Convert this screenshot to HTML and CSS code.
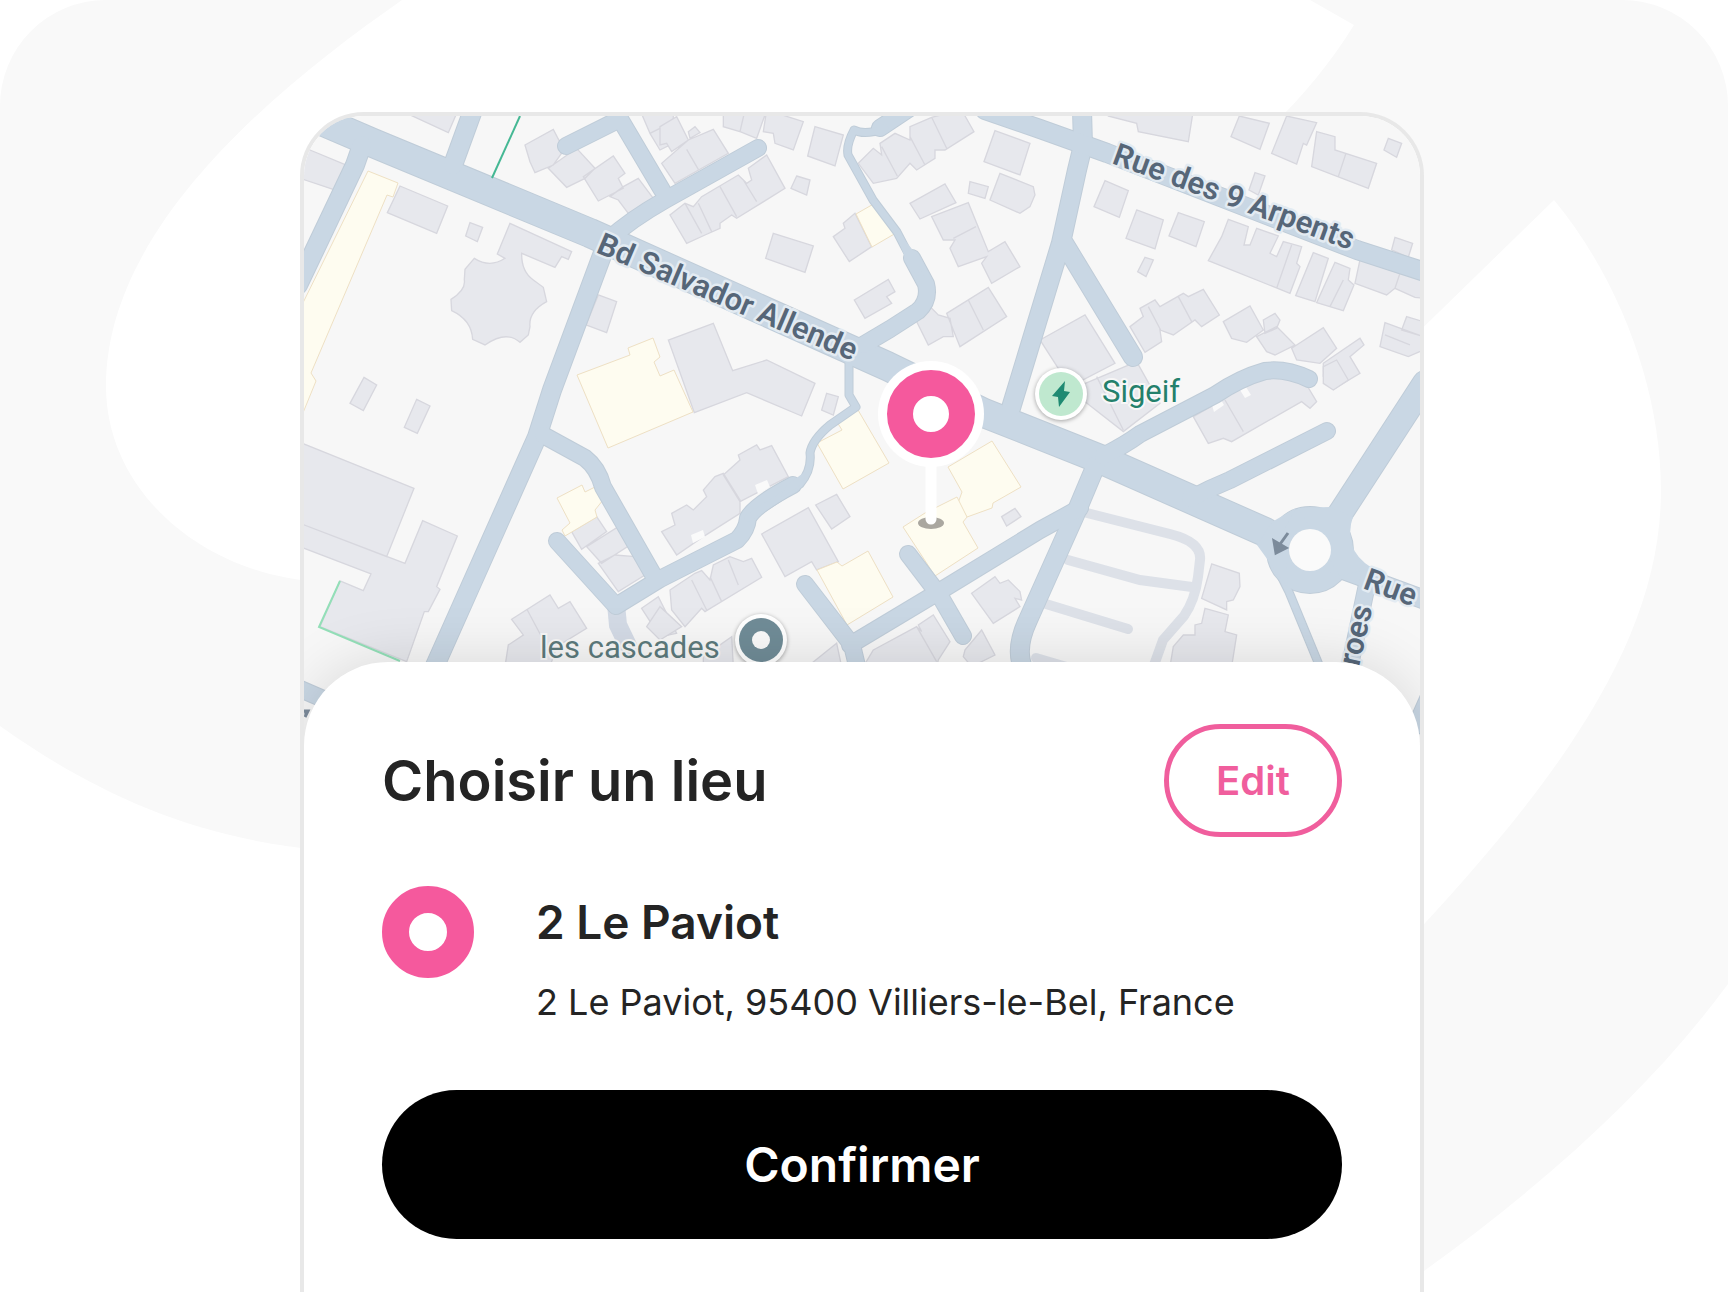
FILE: index.html
```html
<!DOCTYPE html>
<html lang="fr">
<head>
  <meta charset="UTF-8" />
  <meta name="viewport" content="width=device-width, initial-scale=1.0">
  <title>Choisir un lieu</title>
  <link rel="stylesheet" href="styles.css">
</head>
<body>
  <svg class="backdrop" viewBox="0 0 1728 1292" preserveAspectRatio="xMidYMin slice" aria-hidden="true">
    <path d="M106 0H402C270 92 106 230 106 386C106 490 200 574 320 582V850C190 838 90 790 0 726V106A106 106 0 0 1 106 0Z" />
    <path d="M1310 0H1622A106 106 0 0 1 1728 106V984C1650 1090 1540 1190 1400 1288V950C1560 780 1661 640 1661 490C1661 390 1620 280 1554 200L1400 350L1270 128Q1320 80 1354 25Z" />
  </svg>

  <main class="phone">
    <svg class="map" viewBox="304 116 1116 630" role="img" aria-label="Carte">
      <!-- buildings -->
      <g class="buildings" transform="translate(290 100) scale(.3333)">
        <path d="M350 40L475 98 500 40ZM60 150L180 200 150 275 30 235 30 160ZM330 258L473 318 440 400 292 338ZM540 368L578 382 562 425 527 408Z" />
        <path d="M660 370L845 455 835 478 815 470 795 502 695 460Q694 515 730 540L760 562 770 605Q715 635 720 680L715 705 690 727Q650 690 585 735L548 718Q545 660 485 632L483 598Q528 570 523 540L525 508 553 475Q600 505 645 475L622 462Z" />
        <path d="M925 585L980 605 950 698 888 675ZM705 135L790 88 822 150 790 195 735 218 720 185ZM860 145L915 205 885 235 830 262 775 205ZM970 168L1005 220 985 235 1000 265 925 303 880 230ZM1045 235L1090 295 1015 340 985 300 960 290 1000 260Z" />
        <path d="M1050 30L1080 100 1150 65 1150 30ZM1080 100L1110 150 1160 125 1140 70ZM1120 190L1145 175 1160 210 1140 225Z" />
      </g>
      <g class="buildings" transform="translate(660 100) scale(.3333)">
        <path d="M0 80L50 50 85 120 35 155 20 130 0 135ZM85 95L105 80 120 98 90 115ZM85 120L160 88 205 160 45 250 5 190ZM80 148L115 208M190 30L255 30 240 95 190 80ZM255 30L320 30 290 115 240 95ZM320 30L430 65 400 150 345 130 340 100 310 95ZM465 80L550 105 525 198 443 168Z" />
        <path d="M265 205L320 165 375 265 230 355 215 345 180 370 180 385 135 405 80 430 30 345 75 310 100 320 125 290 235 225 260 250 275 240ZM180 260L230 350M250 240L290 305M115 310L155 395M75 310L125 400M410 228L450 240 440 285 393 265Z" />
        <path d="M595 190L640 145 665 165 660 130 705 100 750 120 750 80 815 52 905 30 942 95 855 150 825 150 825 175 770 210 750 190 710 235 640 250ZM665 140L712 228M750 110L795 195M815 52L860 145M520 410L555 385 550 370 585 340 635 440 568 485ZM340 400L460 438 435 517 317 475Z" />
        <path d="M750 310L855 252 888 308 780 357ZM815 350L925 308 985 455 1035 425 1080 500 995 550 965 490 980 470 895 500 870 445 885 420 850 420ZM880 415L948 380M1005 92L1110 130 1080 225 972 185ZM930 245L985 260 975 295 925 280ZM1020 220L1120 260 1125 285 1110 320 1080 340 990 300Z" />
        <path d="M583 600L685 538 705 575 680 590 695 610 615 655ZM765 655L810 620 835 645 870 655 880 710 850 710 805 735ZM860 640L985 562 1040 650 900 740ZM925 600L970 690" />
      </g>
      <g class="buildings" transform="translate(1040 100) scale(.3333)">
        <path d="M205 48L290 70 295 95 445 125 460 30 205 30ZM598 48L688 70 660 148 573 110ZM740 48L830 68 800 135 790 130 770 192 695 160ZM830 95L885 110 885 150 1010 190 985 265 815 200ZM918 160L895 230M1045 115L1085 130 1070 172 1032 150ZM645 218L675 228 655 285 627 270Z" />
        <path d="M195 242L265 272 238 352 162 320ZM290 330L370 360 345 447 258 415ZM415 338L493 365 468 440 387 408ZM315 472L340 480 318 530 293 515Z" />
        <path d="M565 358L625 380 612 435 630 435 650 385 715 408 690 460 710 470 730 425 785 440 770 490 780 500 750 580 505 482 545 410ZM755 435L710 565M820 458L865 475 825 605 767 587ZM885 487L930 505 925 540 942 555 910 632 830 608ZM910 540L870 620M960 480L1080 520 1150 540 1150 595 1125 592 1065 565 1040 585 945 550ZM1080 520L1065 565M1065 412L1118 430 1105 472 1055 450Z" />
        <path d="M270 680L310 650 300 625 345 600 360 620 430 580 445 590 490 568 538 645 485 680 465 660 400 705 360 690 365 725 315 757ZM325 620L362 690M415 590L455 665M550 665L630 618 670 690 620 727 575 715ZM650 710L710 680 765 735 705 765 680 755ZM670 660L705 640 720 660 710 685 675 700ZM755 745L850 683 890 745 840 790 770 780ZM850 790L960 715 972 735 930 770 960 820 880 868 850 830Z" />
        <path d="M0 720L135 645 225 790 90 860ZM90 870L290 785 360 910 250 995ZM170 830L250 990M1035 668L1150 710 1150 750 1105 770 1020 740ZM1035 705L1110 735M1100 650L1150 665 1150 710 1085 690Z" />
      </g>
      <g class="buildings" transform="translate(290 380) scale(.3333)">
        <path d="M222 -8L260 15 220 92 180 70ZM380 58L420 78 382 160 343 142ZM30 187L372 325 290 530 30 430ZM30 430L345 550 398 422 502 468 440 620 450 628 415 695 403 695 350 845 90 740 150 603 220 632 243 582 30 500Z" />
        <path d="M845 455L920 410 950 455 875 508ZM890 500L985 440 1020 495 935 550ZM925 550L975 525 1035 530 1065 585 985 635ZM665 718L780 645 805 685 840 665 890 745 800 800 780 860 645 860 655 795 700 765ZM712 690L760 780M1055 685L1105 650 1160 760 1110 770Z" />
      </g>
      <g class="buildings" transform="translate(660 380) scale(.3333)">
        <path d="M25 -120L160 -170 218 -28 320 -60 465 10 425 108 260 38 103 98ZM500 40L535 50 520 105 485 90Z" />
        <path d="M5 455L45 435 35 400 80 375 100 390 140 350 130 330 165 290 190 280 240 360 240 400 130 470 50 525ZM190 285L240 240 235 225 290 195 300 210 335 197 385 290 240 365ZM467 375L530 343 570 410 515 447ZM305 462L445 383 535 545 470 570 455 545 375 590Z" />
        <path d="M1025 410L1065 385 1083 410 1040 438ZM935 640L1005 590 1020 610 1045 600 1080 635 1085 660 1065 655 1080 680 1000 730ZM30 630L105 580 125 572 150 600 160 555 210 530 250 545 275 535 305 592 135 695 125 685 75 740 35 690ZM95 600L140 690M150 590L185 665M205 540L235 615M-40 740L0 680 65 740 0 780Z" />
        <path d="M640 810L770 740 785 755 775 735 820 705 870 785 835 840 830 860 610 860ZM770 740L830 845M915 810L965 750 1005 825 935 860 910 830ZM455 850L530 790 545 860ZM130 830L215 770 220 860 130 860Z" />
      </g>
      <g class="buildings" transform="translate(1040 380) scale(.3333)">
        <path d="M460 110L530 70 560 50 620 10 700 -25 740 -35 800 15 830 65 810 85 785 65 575 185 550 175 505 190ZM555 60L610 155M850 10L880 30 925 0 890 -60 850 -40ZM515 552L598 580 600 620 580 660 560 665 560 690 485 655ZM495 685L565 705 555 755 590 765 575 860 390 860 400 800 430 765 465 765 465 735 485 730Z" />
      </g>

      <!-- highlighted buildings -->
      <g class="landmarks">
        <path d="M368 171L398 183 393 197 387 195 311 373 316 381 296 430 296 317Z" />
        <path d="M577 375L630 355 628 348 653 338 660 357 654 362 660 376 674 370 693 412 608 448Z" />
        <path d="M856 214L877 202 896 233 872 247Z" />
        <path d="M557 498L582 485 585 492 595 487 603 500 595 510 597 517 565 536 562 530 570 523Z" />
        <path d="M817 443L842 430 837 422 858 410 889 463 843 489Z" />
        <path d="M948 467L992 441 1021 487 993 503 992 508 967 517 958 503 962 492Z" />
        <path d="M903 527L925 513 937 507 957 497 967 517 963 522 978 548 935 576Z" />
        <path d="M817 570L837 562 842 566 868 551 893 597 847 625Z" />
      </g>
      <path class="gaps" d="M755 485l12-5 3 7-12 7ZM691 535l12-5 2 7-12 6ZM1212 405l9-5 3 5-10 7ZM1240 390l6-3 5 8-6 3Z" />

      <g class="paths">
        <path d="M1087 513L1170 534Q1202 542 1200 560L1198 577Q1195 600 1184 616L1163 640 1153 668" />
        <path d="M1068 560L1140 580 1192 587M1046 604L1128 629M1036 658L1070 668" />
        <path class="wide" d="M616 604L618 625 630 650" />
      </g>

      <!-- streets, drawn twice: edge then surface -->
      <defs>
        <g id="streets">
          <path class="w30" d="M296 110L373 143 590 233 887 366 984 413 1100 459 1265 532" />
          <path class="w24" d="M1336 520L1425 383" />
          <path class="w22" d="M1342 550A32 32 0 1 1 1278 550A32 32 0 1 1 1342 550Z" />
          <path class="w18" d="M362 145L355 165 298 285M473 110L453 165M604 250L552 390 537 437 434 668" />
          <path class="w18" d="M1082 110L1083 145 1077 170 1061 243 1011 408M1062 240L1133 357M1096 465L1075 515 1028 620Q1014 650 1024 670" />
          <path class="w18" d="M985 110L1040 129 1107 153 1357 250 1425 272M1338 568L1425 600" />
          <path class="w16" d="M566 146L620 119 662 190M608 240Q630 220 665 200L758 148" />
          <path class="w16" d="M543 435L585 458Q598 468 603 487L655 578M557 541L616 606 660 579 737 540Q747 530 748 518Q755 505 793 485" />
          <path class="w16" d="M863 345L890 329 918 311Q930 300 926 284L912 258M910 108L880 128" />
          <path class="w16" d="M1080 508L1040 530 945 588 850 645M805 584L852 645 858 670M908 554L940 596 963 636" />
          <path class="w16" d="M1103 456Q1125 445 1140 434L1215 395Q1240 378 1265 371Q1285 368 1309 379M1190 499Q1210 488 1230 480L1327 431" />
          <path class="w16" d="M1369 575L1349 670M298 688L335 704M1432 690L1416 726" />
          <path class="w8" d="M885 128Q865 136 854 130Q846 145 848 155L873 200 897 232 922 280M748 518L800 484Q812 470 810 453Q812 440 830 425L856 407 849 395 849 360" />
          <path class="w8" d="M1278 570L1289 592 1322 672" />
        </g>
      </defs>
      <use class="street-edge" href="#streets" />
      <use class="street-fill" href="#streets" />
      <path class="street-body" d="M787 485L806 471 803 484 780 498ZM893 226L921 260 918 276 908 265ZM1298 508L1330 507 1353 517Q1348 530 1352 545 1356 558 1372 568L1340 576ZM1257 545L1272 522 1296 508 1284 530 1288 588Z" />
      <circle class="island" cx="1310" cy="550" r="21" />
      <path class="arrow" d="M1288 533L1278 547M1274 541L1276 553 1286 548Z" />
      <path class="fence" d="M520 116L492 178" />
      <path class="fence light" d="M340 581L319 627 400 661" />
      <path class="arrow" d="M304 711h4l-3 6" />

      <g class="street-names">
        <text transform="translate(595 252) rotate(23)">Bd Salvador Allende</text>
        <text transform="translate(1111 163) rotate(20)">Rue des 9 Arpents</text>
        <text transform="translate(1362 588) rotate(20)">Rue</text>
        <text transform="translate(1359 667) rotate(-77)">roes</text>
      </g>

      <!-- points of interest -->
      <g class="poi">
        <circle class="poi-ring" cx="1061" cy="394" r="26" />
        <circle class="poi-charge" cx="1061" cy="394" r="22" />
        <path class="poi-bolt" d="M1065 381L1052 396 1058 397 1059 407 1070 392 1064 391Z" />
        <text class="poi-name charge" x="1102" y="402">Sigeif</text>
        <circle class="poi-ring" cx="761" cy="640" r="26" />
        <circle class="poi-place" cx="761" cy="640" r="22" />
        <circle class="island" cx="761" cy="640" r="9" />
        <text class="poi-name" x="540" y="658">les cascades</text>
      </g>

      <!-- selected spot -->
      <g class="pin">
        <ellipse class="pin-shadow" cx="931" cy="523" rx="13" ry="6" />
        <path class="pin-stem" d="M931 460V519" />
        <circle class="pin-halo" cx="931" cy="414" r="53" />
        <circle class="pin-ring" cx="931" cy="414" r="31" />
      </g>
    </svg>

    <section class="sheet">
      <header class="sheet-head">
        <h1>Choisir un lieu</h1>
        <button type="button" class="edit">Edit</button>
      </header>
      <div class="place">
        <span class="place-icon"></span>
        <div class="place-text">
          <h2>2 Le Paviot</h2>
          <p>2 Le Paviot, 95400 Villiers-le-Bel, France</p>
        </div>
      </div>
      <button type="button" class="confirm">Confirmer</button>
    </section>
  </main>
</body>
</html>
```

FILE: styles.css
```css
* {
  box-sizing: border-box;
}

body {
  margin: 0;
  min-height: 100vh;
  display: flex;
  padding: 112px 304px 0 300px;
  position: relative;
  overflow-x: hidden;
  background: #fff;
  color: #242424;
  font-family: Inter, "Liberation Sans", sans-serif;
}

h1, h2, p {
  margin: 0;
}

.backdrop {
  position: absolute;
  top: 0;
  left: 0;
  width: 100%;
  height: 100%;
  fill: #f9f9f9;
}

.phone {
  position: relative;
  flex: 1;
  min-width: 0;
  display: flex;
  flex-direction: column;
  border: 4px solid #e8e8e8;
  border-bottom: 0;
  border-radius: 64px 64px 0 0;
  overflow: hidden;
  background: #fff;
}

/* map */
.map {
  display: block;
  width: 100%;
  background: #f7f7f7;
  font-family: Roboto, "Liberation Sans", sans-serif;
}

.buildings path {
  fill: #e7e8ed;
  stroke: #d7d7de;
  stroke-width: 4;
}

.landmarks path {
  fill: #fefcf0;
  stroke: #eee0c4;
  stroke-width: 1;
}

.gaps,
.island {
  fill: #fafafa;
}

.paths path {
  fill: none;
  stroke: #dde1e8;
  stroke-width: 10;
  stroke-linecap: round;
}

.paths .wide {
  stroke: #d3dae5;
  stroke-width: 18;
}

#streets path {
  fill: none;
  stroke-linecap: round;
  stroke-linejoin: round;
}

.w8 { stroke-width: calc(7px + var(--edge)); }
.w16 { stroke-width: calc(16px + var(--edge)); }
.w18 { stroke-width: calc(18px + var(--edge)); }
.w22 { stroke-width: calc(22px + var(--edge)); }
.w24 { stroke-width: calc(24px + var(--edge)); }
.w30 { stroke-width: calc(28px + var(--edge)); }

.street-edge {
  --edge: 2px;
  stroke: #bfccd8;
}

.street-fill {
  --edge: 0px;
  stroke: #c9d7e4;
}

.street-body {
  fill: #c9d7e4;
}

.arrow {
  fill: #7c8b9b;
  stroke: #7c8b9b;
  stroke-width: 3;
}

.fence {
  fill: none;
  stroke: #45b894;
  stroke-width: 2;
}

.fence.light {
  stroke: #93dfb8;
}

.street-names text {
  font-size: 31px;
  font-weight: 600;
  fill: #566678;
  stroke: #e3ebf2;
  stroke-width: 5;
  stroke-linejoin: round;
  paint-order: stroke;
}

.poi-ring {
  fill: #fff;
  filter: drop-shadow(0 1px 2px rgba(0, 0, 0, 0.35));
}

.poi-charge { fill: #bfe8cf; }
.poi-bolt { fill: #1f8a72; }
.poi-place { fill: #708c97; }

.poi-name {
  font-size: 31px;
  fill: #5c7a7c;
  stroke: #f7f7f7;
  stroke-width: 4;
  paint-order: stroke;
}

.poi-name.charge {
  fill: #23806b;
}

.pin-shadow { fill: #aaa7a0; }

.pin-stem {
  stroke: #fff;
  stroke-width: 11;
  stroke-linecap: round;
}

.pin-halo { fill: #fff; }

.pin-ring {
  fill: none;
  stroke: #f5599d;
  stroke-width: 26;
}

/* bottom sheet */
.sheet {
  position: relative;
  flex: 1;
  margin-top: -84px;
  padding: 62px 78px 52px;
  border-radius: 84px 84px 0 0;
  background: #fff;
  box-shadow: 0 0 60px rgba(0, 0, 0, 0.13);
}

.sheet-head {
  display: flex;
  align-items: center;
  justify-content: space-between;
}

h1 {
  font-size: 56px;
  line-height: 72px;
  font-weight: 600;
}

button {
  font-family: inherit;
  font-weight: 600;
  cursor: pointer;
}

.edit {
  width: 178px;
  height: 113px;
  border: 5px solid #f05e9d;
  border-radius: 57px;
  background: #fff;
  color: #f05e9d;
  font-size: 40px;
}

.place {
  display: flex;
  gap: 62px;
  margin-top: 49px;
}

.place-icon {
  flex: none;
  width: 92px;
  height: 92px;
  border: 27px solid #f5599d;
  border-radius: 50%;
}

h2 {
  font-size: 46px;
  line-height: 72px;
  font-weight: 600;
}

.place-text p {
  margin-top: 20px;
  font-size: 36px;
  line-height: 48px;
}

.confirm {
  display: block;
  width: 100%;
  height: 149px;
  margin-top: 64px;
  border: 0;
  border-radius: 75px;
  background: #000;
  color: #fff;
  font-size: 48px;
}
```
